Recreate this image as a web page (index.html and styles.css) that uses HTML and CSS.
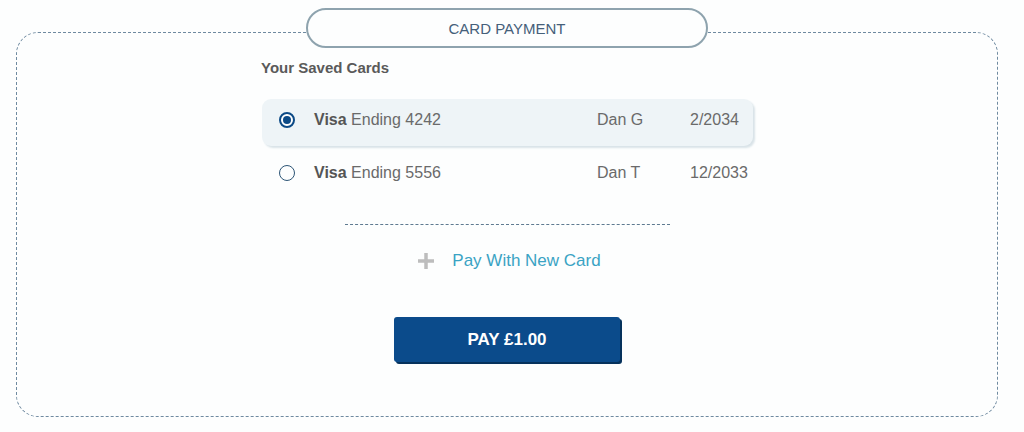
FILE: index.html
```html
<!DOCTYPE html>
<html lang="en">
<head>
<meta charset="utf-8">
<title>Card Payment</title>
<link rel="stylesheet" href="styles.css">
</head>
<body>
<div class="panel">
  <div class="pill">CARD PAYMENT</div>
  <div class="content">
    <h2 class="heading">Your Saved Cards</h2>
    <div class="cards">
      <label class="card selected">
        <span class="radio on"></span>
        <span class="desc"><b>Visa</b> Ending 4242</span>
        <span class="name">Dan G</span>
        <span class="exp">2/2034</span>
      </label>
      <label class="card">
        <span class="radio"></span>
        <span class="desc"><b>Visa</b> Ending 5556</span>
        <span class="name">Dan T</span>
        <span class="exp">12/2033</span>
      </label>
    </div>
    <div class="divider"></div>
    <a class="newcard" href="#">
      <svg class="plus" width="18" height="18" viewBox="0 0 18 18"><path d="M9 1v16M1 9h16" stroke="#bdbdbd" stroke-width="3.5"/></svg>
      <span>Pay With New Card</span>
    </a>
    <button class="pay">PAY £1.00</button>
  </div>
</div>
</body>
</html>
```
FILE: styles.css
```css
html, body {
  margin: 0;
  padding: 0;
  background: #fdfefe;
  font-family: "Liberation Sans", Arial, sans-serif;
}
body {
  padding: 32px 26px 0 16px;
}
.panel {
  position: relative;
  height: 385px;
  box-sizing: border-box;
  border: 1px dashed #6f8aa0;
  border-radius: 22px;
}
.pill {
  position: absolute;
  top: -25px;
  left: 50%;
  transform: translateX(-50%);
  width: 402px;
  height: 40px;
  box-sizing: border-box;
  border: 2px solid #8ea3ae;
  border-radius: 20px;
  background: #fdfefe;
  color: #45607a;
  font-size: 15px;
  display: flex;
  align-items: center;
  justify-content: center;
}
.content {
  width: 492px;
  margin: 0 auto;
  padding-top: 26px;
  display: flex;
  flex-direction: column;
  align-items: center;
}
.heading {
  align-self: stretch;
  margin: 0 0 22px 0;
  font-size: 15px;
  line-height: 18px;
  font-weight: bold;
  color: #5a5a5a;
}
.cards {
  align-self: stretch;
  margin-left: 1px;
  display: flex;
  flex-direction: column;
  gap: 3px;
}
.card {
  display: flex;
  align-items: center;
  height: 47px;
  box-sizing: border-box;
  padding-left: 17px;
  border-radius: 9px;
  font-size: 16px;
  color: #6a6a6a;
}
.card.selected {
  padding-bottom: 6px;
  background: #eef4f7;
  box-shadow: 2px 2px 2px #d9e3e8;
}
.radio {
  width: 16px;
  height: 16px;
  box-sizing: border-box;
  border: 1.5px solid #2d5576;
  border-radius: 50%;
  margin-right: 19px;
  flex: none;
  position: relative;
}
.radio.on {
  border: 2px solid #0c4a86;
  background: #fff;
}
.radio.on::after {
  content: "";
  position: absolute;
  left: 2px;
  top: 2px;
  width: 8px;
  height: 8px;
  border-radius: 50%;
  background: #0c4a86;
}
.desc {
  width: 283px;
}
.desc b {
  color: #555;
}
.name {
  width: 93px;
}
.divider {
  width: 325px;
  margin-top: 28px;
  border-top: 1px dashed #5e7a90;
}
.newcard {
  margin-top: 26px;
  display: flex;
  align-items: center;
  gap: 17px;
  text-decoration: none;
  color: #3aa3c4;
  font-size: 17px;
  line-height: 20px;
  margin-left: 4px;
}
.plus {
  display: block;
}
.pay {
  margin-top: 46px;
  width: 226px;
  height: 45px;
  border: none;
  border-radius: 3px;
  background: #0b4b8b;
  box-shadow: 2px 2px 0 #06325c;
  color: #fff;
  font-family: "Liberation Sans", Arial, sans-serif;
  font-size: 17px;
  font-weight: bold;
  margin-left: 0;
}
```
